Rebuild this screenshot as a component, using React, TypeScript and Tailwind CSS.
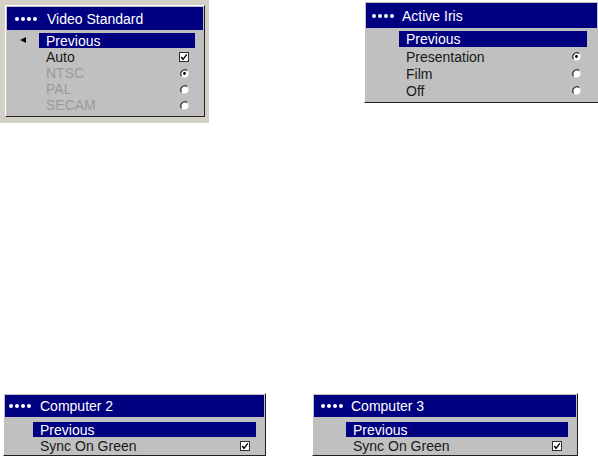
import React from "react";

const Check = () => (
  <svg width="10" height="10" viewBox="0 0 10 10" className="block">
    <rect x="0.5" y="0.5" width="9" height="9" fill="white" stroke="#303030" />
    <path d="M2.2 5 L4 7.3 L7.8 2.3" stroke="black" strokeWidth="1.4" fill="none" />
  </svg>
);

const Radio = ({ on }: { on?: boolean }) => (
  <svg width="9" height="9" viewBox="0 0 9 9" className="block">
    <circle cx="4.5" cy="4.5" r="4" fill="white" />
    <path d="M1.6 7.2 A4 4 0 0 1 7.2 1.6" stroke="#303030" strokeWidth="1.2" fill="none" />
    {on && <circle cx="4.5" cy="4.5" r="1.4" fill="black" />}
  </svg>
);

const Dots = () => (
  <div className="flex gap-[2px] items-center">
    {[0, 1, 2, 3].map((i) => (
      <div key={i} className="w-[4px] h-[4px] rounded-full bg-white" />
    ))}
  </div>
);

type Row = { label: string; ctrl?: "check" | "radio" | "radioOn"; disabled?: boolean };

function Panel({
  title,
  rows,
  width,
  arrow,
  barIndent,
  barPr = "pr-[8px]",
  headerH = 23,
  headerPl = 8,
  titleGap = 11,
  barGap = 3,
  barH = 15,
  rowH = 16,
  pb = 3,
  clipRight,
}: {
  title: string;
  rows: Row[];
  width: string;
  arrow?: boolean;
  barIndent: string;
  barPr?: string;
  headerH?: number;
  headerPl?: number;
  titleGap?: number;
  barGap?: number;
  barH?: number;
  rowH?: number;
  pb?: number;
  clipRight?: boolean;
}) {
  return (
    <div
      className={`${width} bg-[#c0c0c0] border-t border-l border-t-white border-l-white ${
        clipRight ? "" : "border-r border-r-[#202020]"
      } border-b border-b-[#202020] p-[1px]`}
      style={{ paddingBottom: pb }}
    >
      <div
        className="bg-[#000080] flex items-center text-white text-[14px]"
        style={{ height: headerH, paddingLeft: headerPl }}
      >
        <Dots />
        <span className="leading-none" style={{ marginLeft: titleGap }}>
          {title}
        </span>
      </div>
      <div className={`${barPr} text-[14px] leading-none`} style={{ paddingTop: barGap }}>
        <div className={`flex items-center ${barIndent}`}>
          <div
            className="relative flex-1 bg-[#000080] text-white flex items-center pl-[7px]"
            style={{ height: barH }}
          >
            {arrow && (
              <span className="absolute left-[-19px] top-[4px] w-0 h-0 border-y-[3.5px] border-y-transparent border-r-[6px] border-r-black" />
            )}
            Previous
          </div>
        </div>
        <div className="pt-[1px]">
          {rows.map((r) => (
            <div
              key={r.label}
              className={`flex items-center justify-between ${barIndent} pl-[7px] pr-[6px] ${
                r.disabled ? "text-[#9a9a9a]" : "text-[#181818]"
              }`}
              style={{ height: rowH }}
            >
              <span>{r.label}</span>
              {r.ctrl === "check" && <Check />}
              {r.ctrl === "radio" && <Radio />}
              {r.ctrl === "radioOn" && <Radio on />}
            </div>
          ))}
        </div>
      </div>
    </div>
  );
}

export default function App() {
  return (
    <div className="w-[598px] h-[457px] bg-white overflow-hidden font-['Liberation_Sans',Arial,sans-serif] relative">
      <div className="flex items-start">
        <div className="w-[210px] h-[123px] bg-[#d4d0c8] pt-[5px] pl-[5px]">
          <Panel
            title="Video Standard"
            width="w-[200px]"
            arrow
            barIndent="ml-[32px]"
            headerPl={8}
            titleGap={10}
            rows={[
              { label: "Auto", ctrl: "check" },
              { label: "NTSC", ctrl: "radioOn", disabled: true },
              { label: "PAL", ctrl: "radio", disabled: true },
              { label: "SECAM", ctrl: "radio", disabled: true },
            ]}
          />
        </div>
        <div className="ml-[155px] mt-[1px]">
          <Panel
            title="Active Iris"
            width="w-[234px]"
            barIndent="ml-[33px]"
            barPr="pr-[10px]"
            headerH={25}
            headerPl={6}
            titleGap={8}
            barH={16}
            rowH={17}
            clipRight
            rows={[
              { label: "Presentation", ctrl: "radioOn" },
              { label: "Film", ctrl: "radio" },
              { label: "Off", ctrl: "radio" },
            ]}
          />
        </div>
      </div>
      <div className="flex items-start mt-[270px]">
        <div className="ml-[3px]">
          <Panel
            title="Computer 2"
            width="w-[263px]"
            barIndent="ml-[28px]"
            headerH={22}
            headerPl={4}
            titleGap={9}
            barGap={5}
            pb={1}
            rows={[{ label: "Sync On Green", ctrl: "check" }]}
          />
        </div>
        <div className="ml-[46px]">
          <Panel
            title="Computer 3"
            width="w-[266px]"
            barIndent="ml-[32px]"
            headerH={22}
            headerPl={7}
            titleGap={8}
            barGap={5}
            pb={1}
            rows={[{ label: "Sync On Green", ctrl: "check" }]}
          />
        </div>
      </div>
    </div>
  );
}
